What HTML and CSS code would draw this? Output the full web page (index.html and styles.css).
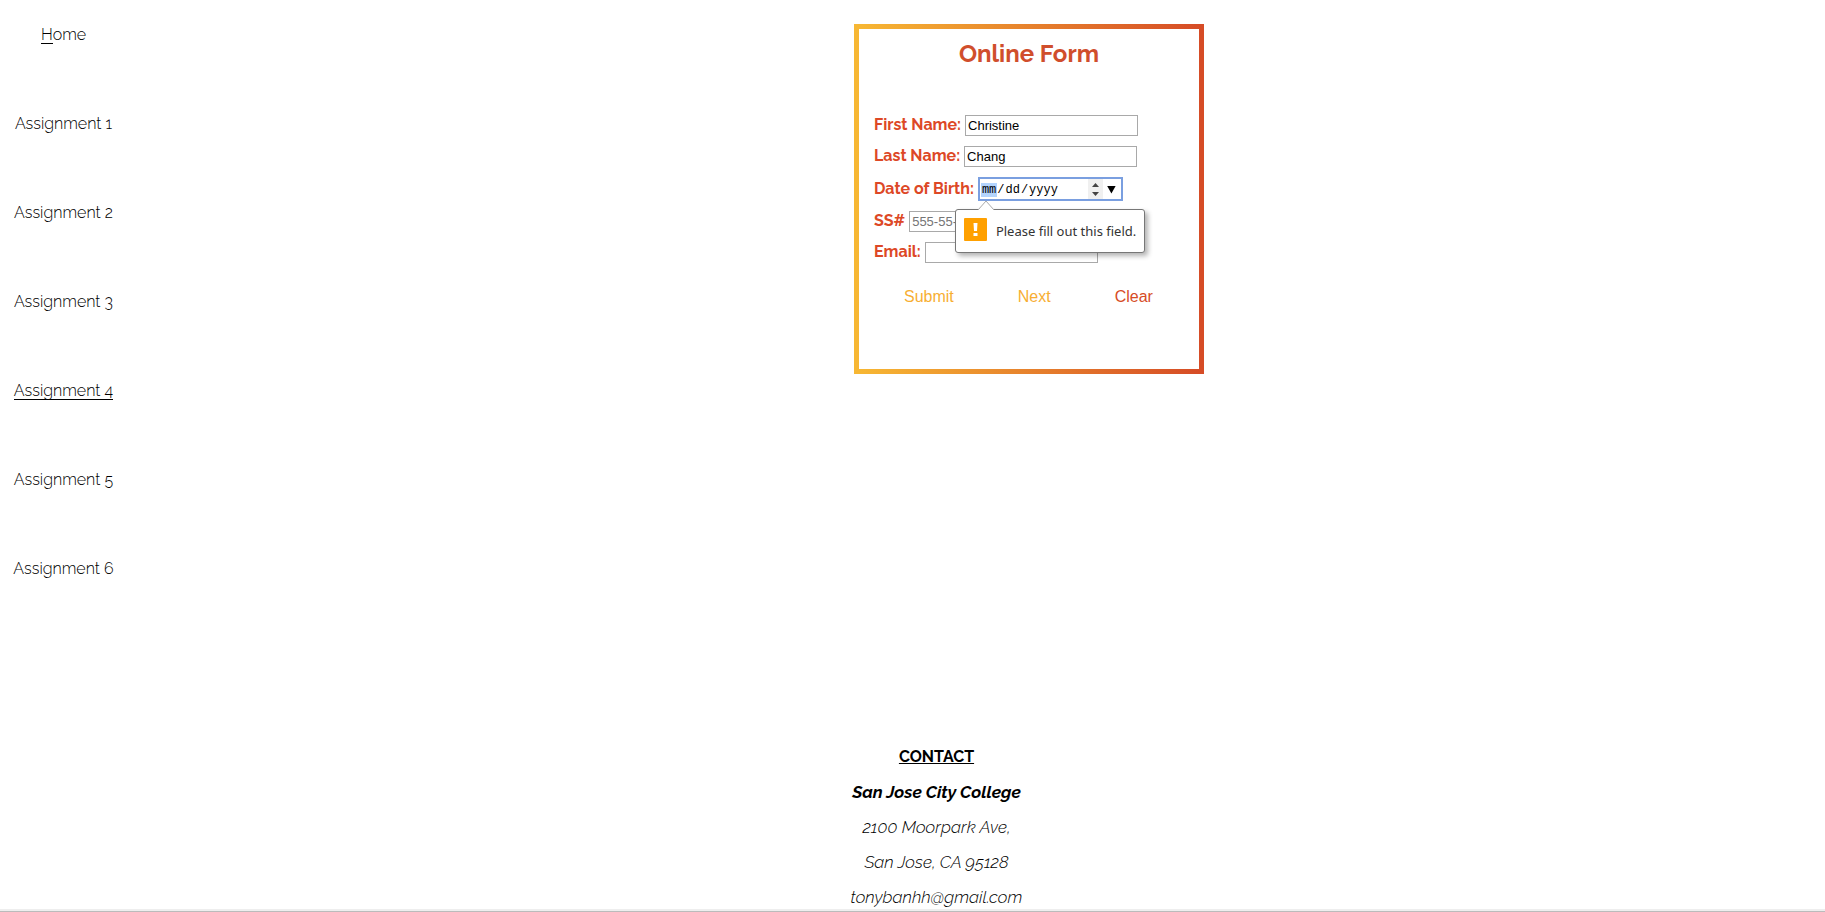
FILE: index.html
```html
<!DOCTYPE html>
<html lang="en">
<head>
<meta charset="utf-8">
<title>Online Form</title>
<link rel="stylesheet" href="styles.css">
</head>
<body>
<div class="page">
  <nav class="nav">
    <a href="#"><span class="initial">H</span>ome</a>
    <a href="#">Assignment 1</a>
    <a href="#">Assignment 2</a>
    <a href="#">Assignment 3</a>
    <a href="#" class="current">Assignment 4</a>
    <a href="#">Assignment 5</a>
    <a href="#">Assignment 6</a>
  </nav>
  <main class="main">
    <form class="card">
      <h1 class="title">Online Form</h1>
      <div class="fields">
        <div class="row">
          <label for="first">First Name:</label>
          <input class="box" id="first" type="text" value="Christine">
        </div>
        <div class="row">
          <label for="last">Last Name:</label>
          <input class="box" id="last" type="text" value="Chang">
        </div>
        <div class="row row-date">
          <label for="dob">Date of Birth:</label>
          <div class="date-wrap">
            <input class="date" id="dob" type="date" required>
            <svg class="spinner" viewBox="0 0 15 20" aria-hidden="true">
              <rect width="15" height="20" fill="#f0f0f0"/>
              <path d="M4 8L7.500 4L11 8zM4 13L7.500 17L11 13z" fill="#444"/>
            </svg>
            <div class="tip" role="alert">
              <svg class="tip-arrow" viewBox="0 0 18 10" aria-hidden="true">
                <path d="M1 10L9 1L17 10" fill="#fff" stroke="#aaa"/>
              </svg>
              <svg class="tip-icon" viewBox="0 0 23 23" aria-hidden="true">
                <rect width="23" height="23" rx="1" fill="#ffa000"/>
                <path d="M9.500 5h4l-.5 8h-3zM9.500 15h4v3h-4z" fill="#fff"/>
              </svg>
              <span>Please fill out this field.</span>
            </div>
          </div>
        </div>
        <div class="row">
          <label for="ss">SS#</label>
          <input class="box" id="ss" type="text" placeholder="555-55-5555">
        </div>
        <div class="row">
          <label for="email">Email:</label>
          <input class="box" id="email" type="email">
        </div>
      </div>
      <div class="actions">
        <button type="submit">Submit</button>
        <button type="button">Next</button>
        <button type="reset" class="clear">Clear</button>
      </div>
    </form>
  </main>
</div>
<footer class="footer">
  <h2>CONTACT</h2>
  <p class="school">San Jose City College</p>
  <p>2100 Moorpark Ave,</p>
  <p>San Jose, CA 95128</p>
  <p>tonybanhh@gmail.com</p>
</footer>
</body>
</html>
```
FILE: styles.css
```css
* { box-sizing: border-box; }

body {
  margin: 0;
  min-height: 100vh;
  display: flex;
  flex-direction: column;
  background: #fff;
  color: #000;
  font: 300 16px/20px Raleway, Lato, sans-serif;
}

.page { flex: 1; display: flex; }

.nav {
  width: 127px;
  padding-top: 27px;
  display: flex;
  flex-direction: column;
  align-items: center;
  gap: 73px;
  line-height: 16px;
}
.nav a { color: #000; text-decoration: none; border-bottom: 1px solid transparent; margin-bottom: -1px; }
.nav .current { border-bottom-color: #000; }
.initial { display: inline-block; border-bottom: 1px solid #000; margin-bottom: -1px; }

.main {
  flex: 1;
  padding: 24px 0 0 106px;
  display: flex;
  justify-content: center;
  align-items: flex-start;
}

.card {
  width: 350px;
  min-height: 350px;
  padding: 15px;
  border: 5px solid;
  border-image: linear-gradient(to right, #f7b733, #d64c26) 1;
}
.title {
  margin: 0;
  text-align: center;
  font-size: 24px;
  line-height: 20px;
  font-weight: 700;
  color: #d04e2c;
}

.fields {
  margin-top: 51px;
  display: flex;
  flex-direction: column;
  gap: 10px;
}
.row {
  display: flex;
  align-items: flex-start;
  gap: 4px;
  color: #dd4826;
  font-weight: 700;
}
.row-date { align-items: center; }

.box {
  width: 173px;
  height: 21px;
  padding: 1px 2px;
  border: 1px solid #a9a9a9;
  background: #fff;
  font: 13px "Liberation Sans", sans-serif;
  color: #000;
}
.box::placeholder { color: #757575; }

.date-wrap { position: relative; height: 24px; }
.date {
  display: block;
  width: 145px;
  height: 24px;
  padding: 2px 5px 1px 1px;
  border: 2px solid #7a9fe0;
  background: #fff;
  font: 12px "Liberation Mono", monospace;
  color: #000;
}
.date::-webkit-datetime-edit { padding: 0; }
.date::-webkit-datetime-edit-fields-wrapper { padding: 0; }
.date::-webkit-datetime-edit-month-field,
.date::-webkit-datetime-edit-day-field,
.date::-webkit-datetime-edit-year-field { padding: 1px; color: #000; }
.date::-webkit-datetime-edit-month-field { background: #b3d4fd; }
.date::-webkit-calendar-picker-indicator {
  width: 9px;
  height: 8px;
  padding: 0;
  background: #000;
  clip-path: polygon(0 0, 100% 0, 50% 100%);
}
.spinner { position: absolute; top: 2px; right: 20px; width: 15px; height: 20px; }

.tip {
  position: absolute;
  top: 32px;
  left: -23px;
  z-index: 2;
  height: 44px;
  padding: 0 8px;
  display: flex;
  align-items: center;
  gap: 9px;
  border: 1px solid #777;
  border-radius: 3px;
  background: #fff;
  box-shadow: 3px 3px 5px rgba(0, 0, 0, .3);
  color: #333;
  font: 400 13px "Noto Sans", sans-serif;
  white-space: nowrap;
}
.tip-icon { width: 23px; height: 23px; margin-bottom: 3px; }
.tip-arrow { position: absolute; top: -10px; left: 21px; width: 18px; height: 10px; }

.actions { display: flex; gap: 64px; margin: 24px 0 0 30px; }
.actions button {
  padding: 0;
  border: 0;
  background: none;
  font: 16px/20px "Liberation Sans", sans-serif;
  color: #f7ae33;
}
.actions .clear { color: #d64c26; }

.footer {
  padding: 0 0 4px 48px;
  border-bottom: 1px solid #bbb;
  box-shadow: inset 0 -2px #eee;
  display: flex;
  flex-direction: column;
  align-items: center;
  gap: 15px;
}
.footer h2, .footer p { margin: 0; }
.footer h2 { font-size: 16px; font-weight: 700; text-decoration: underline; }
.footer p { font-size: 17px; font-style: italic; }
.footer .school { font-weight: 700; }
```
